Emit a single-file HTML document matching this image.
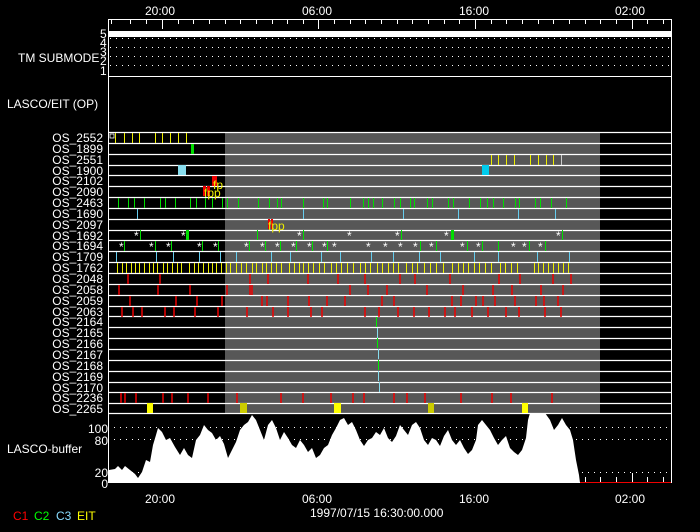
<!DOCTYPE html>
<html><head><style>
html,body{margin:0;padding:0;background:#000;}
svg{display:block;}
text{font-family:"Liberation Sans",sans-serif;fill:#fff;font-size:12px;}
</style></head><body>
<svg width="700" height="532" viewBox="0 0 700 532">
<rect width="700" height="532" fill="#000"/>
<!-- top labels -->
<text x="145" y="15">20:00</text>
<text x="302" y="15">06:00</text>
<text x="459" y="15">16:00</text>
<text x="615" y="15">02:00</text>
<!-- frame -->
<rect x="108.5" y="19.5" width="563" height="463" fill="none" stroke="#fff" stroke-width="1"/>
<!-- top ticks -->
<g stroke="#fff" stroke-width="1">
<path d="M111.5 20v4M130.5 20v4M146.5 20v4M162.5 20v9M178.5 20v4M193.5 20v4M209.5 20v4M225.5 20v4M240.5 20v4M256.5 20v4M272.5 20v4M287.5 20v4M303.5 20v4M318.5 20v9M334.5 20v4M350.5 20v4M365.5 20v4M381.5 20v4M397.5 20v4M412.5 20v4M428.5 20v4M444.5 20v4M459.5 20v4M475.5 20v9M491.5 20v4M506.5 20v4M522.5 20v4M538.5 20v4M553.5 20v4M569.5 20v4M585.5 20v4M600.5 20v4M616.5 20v4M632.5 20v9M647.5 20v4M663.5 20v4"/>
</g>
<!-- TM submode -->
<rect x="109" y="31" width="562" height="6" fill="#fff"/>
<g stroke="#fff" stroke-width="1" stroke-dasharray="1 5">
<line x1="110" y1="38.5" x2="671" y2="38.5"/>
<line x1="110" y1="47.5" x2="671" y2="47.5"/>
<line x1="110" y1="56.5" x2="671" y2="56.5"/>
<line x1="110" y1="65.5" x2="671" y2="65.5"/>
</g>
<line x1="108" y1="76.5" x2="672" y2="76.5" stroke="#fff"/>
<text x="100" y="38" font-size="11">5</text>
<text x="100" y="47" font-size="11">4</text>
<text x="100" y="56" font-size="11">3</text>
<text x="100" y="65" font-size="11">2</text>
<text x="100" y="75" font-size="11">1</text>
<text x="18" y="62">TM SUBMODE</text>
<text x="7" y="108">LASCO/EIT (OP)</text>
<!-- gray region -->
<rect x="225" y="132" width="375" height="281" fill="#575757"/>
<!-- row lines -->
<g stroke="#fff" stroke-width="1.2">
<line x1="108" y1="132.5" x2="672" y2="132.5"/><line x1="108" y1="143.5" x2="672" y2="143.5"/><line x1="108" y1="154.5" x2="672" y2="154.5"/><line x1="108" y1="165.5" x2="672" y2="165.5"/><line x1="108" y1="175.5" x2="672" y2="175.5"/><line x1="108" y1="186.5" x2="672" y2="186.5"/><line x1="108" y1="197.5" x2="672" y2="197.5"/><line x1="108" y1="208.5" x2="672" y2="208.5"/><line x1="108" y1="219.5" x2="672" y2="219.5"/><line x1="108" y1="230.5" x2="672" y2="230.5"/><line x1="108" y1="240.5" x2="672" y2="240.5"/><line x1="108" y1="251.5" x2="672" y2="251.5"/><line x1="108" y1="262.5" x2="672" y2="262.5"/><line x1="108" y1="273.5" x2="672" y2="273.5"/><line x1="108" y1="284.5" x2="672" y2="284.5"/><line x1="108" y1="295.5" x2="672" y2="295.5"/><line x1="108" y1="306.5" x2="672" y2="306.5"/><line x1="108" y1="316.5" x2="672" y2="316.5"/><line x1="108" y1="327.5" x2="672" y2="327.5"/><line x1="108" y1="338.5" x2="672" y2="338.5"/><line x1="108" y1="349.5" x2="672" y2="349.5"/><line x1="108" y1="360.5" x2="672" y2="360.5"/><line x1="108" y1="371.5" x2="672" y2="371.5"/><line x1="108" y1="382.5" x2="672" y2="382.5"/><line x1="108" y1="392.5" x2="672" y2="392.5"/><line x1="108" y1="403.5" x2="672" y2="403.5"/><line x1="108" y1="413.5" x2="672" y2="413.5"/>
</g>
<!-- row labels -->
<g text-anchor="end" font-size="12">
<text x="103" y="142">OS_2552</text><text x="103" y="153">OS_1899</text><text x="103" y="164">OS_2551</text><text x="103" y="175">OS_1900</text><text x="103" y="185">OS_2102</text><text x="103" y="196">OS_2090</text><text x="103" y="207">OS_2463</text><text x="103" y="218">OS_1690</text><text x="103" y="229">OS_2097</text><text x="103" y="240">OS_1692</text><text x="103" y="250">OS_1694</text><text x="103" y="261">OS_1709</text><text x="103" y="272">OS_1762</text><text x="103" y="283">OS_2048</text><text x="103" y="294">OS_2058</text><text x="103" y="305">OS_2059</text><text x="103" y="316">OS_2063</text><text x="103" y="326">OS_2164</text><text x="103" y="337">OS_2165</text><text x="103" y="348">OS_2166</text><text x="103" y="359">OS_2167</text><text x="103" y="370">OS_2168</text><text x="103" y="381">OS_2169</text><text x="103" y="392">OS_2170</text><text x="103" y="402">OS_2236</text><text x="103" y="413">OS_2265</text>
</g>
<!-- row 0 -->
<g stroke="#ee0" stroke-width="1">
<path d="M115.5 133v10M124.5 133v10M132.5 133v10M139.5 133v10M155.5 133v10M162.5 133v10M170.5 133v10M178.5 133v10M186.5 133v10"/>
<path d="M491.5 155v10M498.5 155v10M506.5 155v10M514.5 155v10M530.5 155v10M538.5 155v10M546.5 155v10M553.5 155v10"/>
</g>
<path d="M561.5 155v10" stroke="#ccc"/>
<rect x="110" y="134" width="4" height="4" fill="none" stroke="#fff" stroke-width="0.8"/>
<rect x="191" y="144" width="3" height="10" fill="#0d0"/>
<rect x="178" y="165" width="8" height="10" fill="#8de"/>
<rect x="482" y="165" width="7" height="10" fill="#0ce"/>
<rect x="212" y="176" width="5" height="10" fill="#e00"/>
<rect x="203" y="186" width="3" height="10" fill="#e00"/><rect x="207" y="186" width="3" height="10" fill="#e00"/>
<text x="213" y="189" font-size="10" style="fill:#ee0">fp</text>
<text x="204" y="197" font-size="10" style="fill:#ee0">fpp</text>
<rect x="268" y="219" width="2" height="10" fill="#e00"/><rect x="271" y="219" width="2" height="10" fill="#e00"/>
<text x="268" y="230" font-size="10" style="fill:#ee0">fpp</text>
<!-- row 6 green -->
<g stroke="#0d0" stroke-width="1">
<path d="M118.5 198v10M128.5 198v10M134.5 198v10M144.5 198v10M160.5 198v10M165.5 198v10M175.5 198v10M190.5 198v10M196.5 198v10M205.5 198v10M212.5 198v10M222.5 198v10M227.5 198v10M238.5 198v10M258.5 198v10M269.5 198v10M277.5 198v10M281.5 198v10M303.5 198v10M323.5 198v10M327.5 198v10M350.5 198v10M363.5 198v10M368.5 198v10M373.5 198v10M382.5 198v10M394.5 198v10M400.5 198v10M410.5 198v10M414.5 198v10M427.5 198v10M432.5 198v10M448.5 198v10M453.5 198v10M469.5 198v10M480.5 198v10M487.5 198v10M493.5 198v10M503.5 198v10M515.5 198v10M519.5 198v10M535.5 198v10M540.5 198v10M551.5 198v10M566.5 198v10"/>
<path d="M140.5 230v10M186.5 230v10M257.5 230v10M303.5 230v10M401.5 230v10M451.5 230v10M562.5 230v10M186.5 230v10"/>
<path d="M124.5 241v10M155.5 241v10M171.5 241v10M202.5 241v10M218.5 241v10M249.5 241v10M265.5 241v10M280.5 241v10M296.5 241v10M312.5 241v10M327.5 241v10M420.5 241v10M436.5 241v10M467.5 241v10M482.5 241v10M498.5 241v10M529.5 241v10M545.5 241v10"/>
</g>
<rect x="186" y="230" width="3" height="10" fill="#0d0"/><rect x="451" y="230" width="3" height="10" fill="#0d0"/>
<g fill="#fff" font-size="9"><text x="134" y="240">*</text><text x="181" y="240">*</text><text x="395" y="240">*</text><text x="444" y="240">*</text><text x="556" y="240">*</text><text x="347" y="240">*</text><text x="297" y="240">*</text>
<text x="119" y="251">*</text><text x="149" y="251">*</text><text x="166" y="251">*</text><text x="197" y="251">*</text><text x="213" y="251">*</text><text x="244" y="251">*</text><text x="260" y="251">*</text><text x="275" y="251">*</text><text x="291" y="251">*</text><text x="307" y="251">*</text><text x="322" y="251">*</text><text x="332" y="251">*</text><text x="366" y="251">*</text><text x="383" y="251">*</text><text x="398" y="251">*</text><text x="413" y="251">*</text><text x="429" y="251">*</text><text x="460" y="251">*</text><text x="476" y="251">*</text><text x="511" y="251">*</text><text x="522" y="251">*</text><text x="538" y="251">*</text></g>
<!-- cyan rows -->
<g stroke="#6ce" stroke-width="1">
<path d="M137.5 209v10M303.5 209v10M403.5 209v10M458.5 209v10M518.5 209v10M555.5 209v10"/>
<path d="M116.5 252v10M156.5 252v10M173.5 252v10M199.5 252v10M220.5 252v10M236.5 252v10M271.5 252v10M290.5 252v10M321.5 252v10M340.5 252v10M371.5 252v10M393.5 252v10M419.5 252v10M440.5 252v10M474.5 252v10M498.5 252v10M537.5 252v10M569.5 252v10"/>
</g>
<!-- row 12 yellow -->
<g stroke="#ee0" stroke-width="1">
<path d="M117.5 263v10M122.5 263v10M126.5 263v10M131.5 263v10M135.5 263v10M139.5 263v10M144.5 263v10M149.5 263v10M153.5 263v10M157.5 263v10M163.5 263v10M167.5 263v10M172.5 263v10M177.5 263v10M181.5 263v10M189.5 263v10M194.5 263v10M198.5 263v10M203.5 263v10M208.5 263v10M212.5 263v10M216.5 263v10M221.5 263v10M226.5 263v10M230.5 263v10M236.5 263v10M241.5 263v10M246.5 263v10M252.5 263v10M256.5 263v10M262.5 263v10M266.5 263v10M271.5 263v10M276.5 263v10M281.5 263v10M289.5 263v10M294.5 263v10M299.5 263v10M303.5 263v10M308.5 263v10M313.5 263v10M319.5 263v10M324.5 263v10M331.5 263v10M336.5 263v10M341.5 263v10M347.5 263v10M353.5 263v10M360.5 263v10M365.5 263v10M370.5 263v10M377.5 263v10M382.5 263v10M388.5 263v10M393.5 263v10M398.5 263v10M406.5 263v10M412.5 263v10M417.5 263v10M424.5 263v10M430.5 263v10M436.5 263v10M443.5 263v10M452.5 263v10M458.5 263v10M463.5 263v10M468.5 263v10M474.5 263v10M479.5 263v10M485.5 263v10M491.5 263v10M500.5 263v10M505.5 263v10M511.5 263v10M517.5 263v10M534.5 263v10M538.5 263v10M543.5 263v10M548.5 263v10M553.5 263v10M558.5 263v10M563.5 263v10M568.5 263v10"/>
</g>
<!-- red rows -->
<g stroke="#e00" stroke-width="1.5">
<path d="M128 274v10M160 274v10M250 274v10M268 274v10M308 274v10M338 274v10M365 274v10M400 274v10M415 274v10M450 274v10M499 274v10M520 274v10M553 274v10M571 274v10"/>
<path d="M119 285v10M158 285v10M190 285v10M227 285v10M250 285v10M252 285v10M350 285v10M368 285v10M387 285v10M427 285v10M463 285v10M493 285v10M512 285v10M541 285v10M563 285v10"/>
<path d="M130 296v10M176 296v10M197 296v10M222 296v10M262 296v10M267 296v10M288 296v10M309 296v10M327 296v10M345 296v10M382 296v10M394 296v10M452 296v10M461 296v10M476 296v10M483 296v10M495 296v10M515 296v10M536 296v10M544 296v10M558 296v10"/>
<path d="M122 307v10M133 307v10M142 307v10M165 307v10M174 307v10M195 307v10M218 307v10M247 307v10M273 307v10M288 307v10M311 307v10M322 307v10M365 307v10M379 307v10M398 307v10M414 307v10M429 307v10M445 307v10M455 307v10M472 307v10M488 307v10M506 307v10M519 307v10M545 307v10M561 307v10"/>
<path d="M121 393v10M125 393v10M136 393v10M163 393v10M172 393v10M188 393v10M208 393v10M237 393v10M281 393v10M303 393v10M331 393v10M353 393v10M364 393v10M394 393v10M407 393v10M425 393v10M461 393v10M492 393v10M511 393v10M552 393v10"/>
</g>
<path d="M376.5 317v10" stroke="#0e0"/>
<path d="M377.5 328v10M378.5 349v10M378.5 371v10M379.5 382v10" stroke="#8de"/>
<path d="M377.5 338v10M378.5 360v10" stroke="#0e0"/>
<!-- row 25 blocks -->
<rect x="147" y="403" width="6" height="10" fill="#ff0"/>
<rect x="240" y="403" width="7" height="10" fill="#cc0"/>
<rect x="334" y="403" width="7" height="10" fill="#ff0"/>
<rect x="428" y="403" width="6" height="10" fill="#cc0"/>
<rect x="522" y="403" width="6" height="10" fill="#ff0"/>
<!-- buffer -->
<text x="7" y="453">LASCO-buffer</text>
<g text-anchor="end" font-size="12"><text x="108" y="433">100</text><text x="108" y="445">80</text><text x="108" y="477">20</text><text x="108" y="488">0</text></g>
<g stroke="#fff" stroke-dasharray="1 5"><line x1="114" y1="427.5" x2="671" y2="427.5"/><line x1="114" y1="439.5" x2="671" y2="439.5"/><line x1="114" y1="472.5" x2="671" y2="472.5"/></g>
<path fill="#fff" d="M109 483 L109 470 L115 469 L118 466 L122 470 L125 466 L130 470 L135 474 L138 478 L142 472 L146 460 L150 462 L153 445 L156 435 L158 428 L162 432 L166 440 L170 438 L175 447 L180 455 L184 448 L188 455 L192 458 L196 440 L200 435 L204 425 L208 430 L212 433 L216 440 L220 436 L224 444 L228 458 L232 450 L236 442 L240 430 L244 425 L248 422 L252 415 L256 420 L260 430 L264 440 L268 425 L272 420 L276 428 L280 440 L284 432 L288 438 L292 445 L296 448 L300 440 L304 445 L308 452 L312 448 L316 458 L320 455 L324 448 L328 445 L332 435 L336 428 L340 420 L344 418 L348 425 L352 422 L356 430 L360 440 L364 446 L368 440 L372 438 L376 432 L380 435 L384 428 L388 438 L392 442 L396 436 L400 425 L404 430 L408 435 L412 425 L416 422 L420 428 L424 440 L428 445 L432 438 L436 440 L440 446 L444 436 L448 430 L452 440 L456 445 L460 440 L464 448 L468 454 L472 450 L476 440 L478 425 L482 420 L486 425 L490 430 L494 438 L498 445 L502 440 L506 436 L510 448 L514 452 L518 455 L522 450 L526 438 L528 420 L530 413 L545 413 L550 420 L554 430 L558 425 L562 418 L566 425 L570 430 L573 440 L576 460 L579 475 L580 483 Z"/>
<line x1="580" y1="482.5" x2="671" y2="482.5" stroke="#e00"/>
<g stroke="#fff"><path d="M585.5 482v-5M600.5 482v-5M616.5 482v-5M632.5 482v-9M647.5 482v-5M663.5 482v-5"/></g>
<!-- bottom labels -->
<text x="145" y="503">20:00</text>
<text x="302" y="503">06:00</text>
<text x="459" y="503">16:00</text>
<text x="615" y="503">02:00</text>
<text x="310" y="517">1997/07/15 16:30:00.000</text>
<g font-size="10"><text x="13" y="520" style="fill:#f00">C1</text><text x="34" y="520" style="fill:#0f0">C2</text><text x="56" y="520" style="fill:#8df">C3</text><text x="77" y="520" style="fill:#ff0">EIT</text></g>
</svg>
</body></html>
